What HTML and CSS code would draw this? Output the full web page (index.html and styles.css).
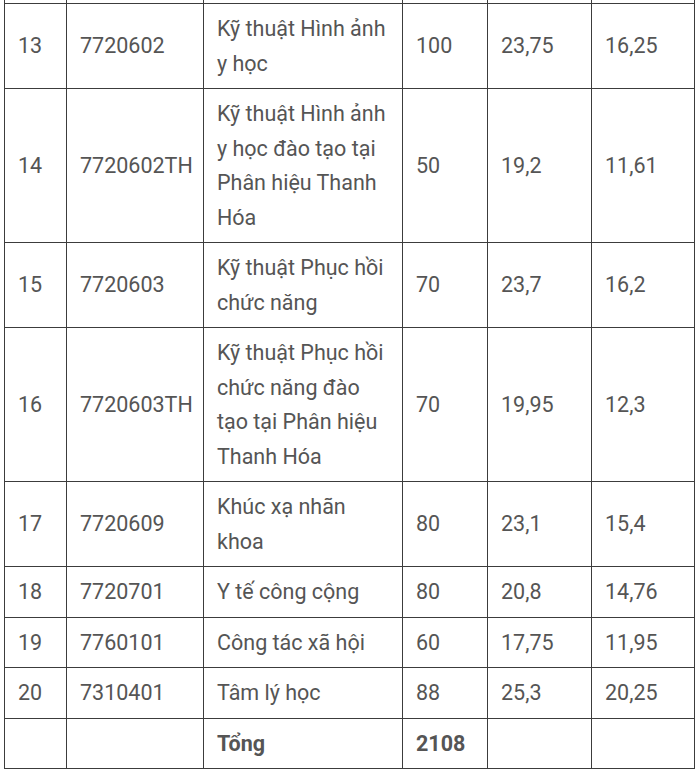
FILE: index.html
```html
<!DOCTYPE html>
<html lang="vi">
<head>
<meta charset="utf-8">
<link rel="stylesheet" href="styles.css">
</head>
<body>
<div class="wrap">
<table class="grid">
<colgroup>
<col class="c1"><col class="c2"><col class="c3"><col class="c4"><col class="c5"><col class="c6">
</colgroup>
<tbody>
<tr class="stub"><td></td><td></td><td></td><td></td><td></td><td></td></tr>
<tr><td>13</td><td>7720602</td><td>Kỹ thuật Hình ảnh<br>y học</td><td>100</td><td>23,75</td><td>16,25</td></tr>
<tr><td>14</td><td>7720602TH</td><td>Kỹ thuật Hình ảnh<br>y học đào tạo tại<br>Phân hiệu Thanh<br>Hóa</td><td>50</td><td>19,2</td><td>11,61</td></tr>
<tr><td>15</td><td>7720603</td><td>Kỹ thuật Phục hồi<br>chức năng</td><td>70</td><td>23,7</td><td>16,2</td></tr>
<tr><td>16</td><td>7720603TH</td><td>Kỹ thuật Phục hồi<br>chức năng đào<br>tạo tại Phân hiệu<br>Thanh Hóa</td><td>70</td><td>19,95</td><td>12,3</td></tr>
<tr><td>17</td><td>7720609</td><td>Khúc xạ nhãn<br>khoa</td><td>80</td><td>23,1</td><td>15,4</td></tr>
<tr><td>18</td><td>7720701</td><td>Y tế công cộng</td><td>80</td><td>20,8</td><td>14,76</td></tr>
<tr><td>19</td><td>7760101</td><td>Công tác xã hội</td><td>60</td><td>17,75</td><td>11,95</td></tr>
<tr><td>20</td><td>7310401</td><td>Tâm lý học</td><td>88</td><td>25,3</td><td>20,25</td></tr>
<tr class="total"><td></td><td></td><td><b>Tổng</b></td><td><b>2108</b></td><td></td><td></td></tr>
</tbody>
</table>
</div>
</body>
</html>
```

FILE: styles.css
```css
html, body {
  margin: 0;
  padding: 0;
  background: #fff;
}
.wrap {
  padding-left: 4px;
}
.grid {
  border-collapse: collapse;
  table-layout: fixed;
  width: 690px;
  font-family: Roboto, "Noto Sans", sans-serif;
  font-size: 21.5px;
  line-height: 34.5px;
  color: #555;
}
.c1 { width: 62px; }
.c2 { width: 137px; }
.c3 { width: 199px; }
.c4 { width: 85px; }
.c5 { width: 104px; }
.c6 { width: 103px; }
.grid td {
  border: 1px solid #3c3c3c;
  padding: 8px 0 7px 13px;
  vertical-align: middle;
  white-space: nowrap;
}
.stub td {
  border-top: none;
  height: 3px;
  padding: 0;
  line-height: 0;
}
.grid b {
  font-weight: 700;
}
```
